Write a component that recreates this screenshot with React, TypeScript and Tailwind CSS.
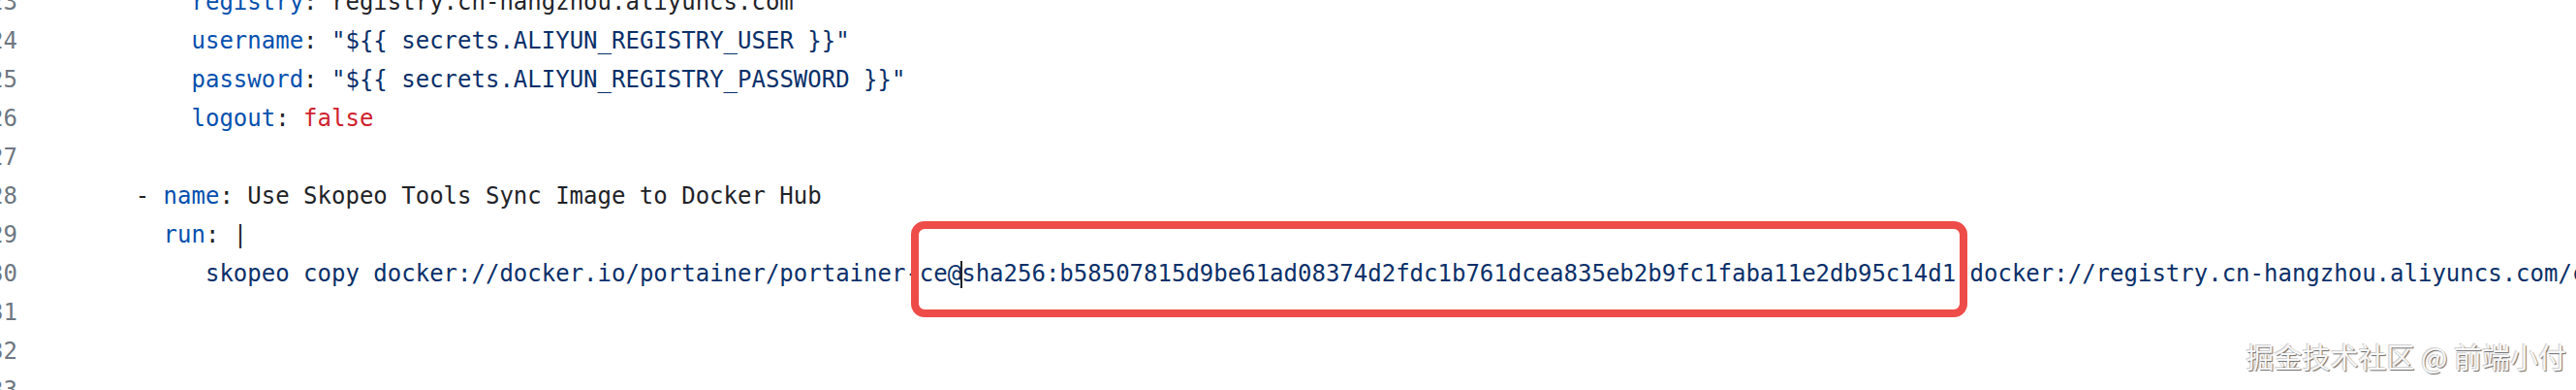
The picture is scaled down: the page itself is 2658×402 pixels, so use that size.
import React from "react";

const K = ({ children }: { children: React.ReactNode }) => (
  <span className="text-[#0550ae]">{children}</span>
);
const S = ({ children }: { children: React.ReactNode }) => (
  <span className="text-[#0a3069]">{children}</span>
);
const R = ({ children }: { children: React.ReactNode }) => (
  <span className="text-[#cf222e]">{children}</span>
);

type Line = { n: number; content: React.ReactNode };

const lines: Line[] = [
  {
    n: 23,
    content: (
      <>
        {"          "}
        <K>registry</K>: registry.cn-hangzhou.aliyuncs.com
      </>
    ),
  },
  {
    n: 24,
    content: (
      <>
        {"          "}
        <K>username</K>: <S>{'"${{ secrets.ALIYUN_REGISTRY_USER }}"'}</S>
      </>
    ),
  },
  {
    n: 25,
    content: (
      <>
        {"          "}
        <K>password</K>: <S>{'"${{ secrets.ALIYUN_REGISTRY_PASSWORD }}"'}</S>
      </>
    ),
  },
  {
    n: 26,
    content: (
      <>
        {"          "}
        <K>logout</K>: <R>false</R>
      </>
    ),
  },
  { n: 27, content: "" },
  {
    n: 28,
    content: (
      <>
        {"      - "}
        <K>name</K>: Use Skopeo Tools Sync Image to Docker Hub
      </>
    ),
  },
  {
    n: 29,
    content: (
      <>
        {"        "}
        <K>run</K>: |
      </>
    ),
  },
  {
    n: 30,
    content: (
      <>
        {"           "}
        <S>
          skopeo copy docker://docker.io/portainer/portainer-ce@
          <span className="inline-block w-[2px] h-[28px] -mx-[1px] bg-[#1f2328] align-middle" />
          sha256:b58507815d9be61ad08374d2fdc1b761dcea835eb2b9fc1faba11e2db95c14d1
          docker://registry.cn-hangzhou.aliyuncs.com/cloud-native-mirror/portainer-ce:latest
        </S>
      </>
    ),
  },
  { n: 31, content: "" },
  { n: 32, content: "" },
  { n: 33, content: "" },
];

export default function App() {
  return (
    <div className="relative w-[2658px] h-[402px] overflow-hidden bg-white">
      <div
        className="-mt-[18px] flex flex-col text-[24px] leading-[40px] text-[#1f2328]"
        style={{ fontFamily: '"DejaVu Sans Mono", "Liberation Mono", monospace' }}
      >
        {lines.map((l) => (
          <div key={l.n} className="flex h-[40px] items-start whitespace-pre">
            <div className="flex w-[18px] shrink-0 justify-end text-[#6e7781]">
              {l.n}
            </div>
            <div className="ml-[35px]">{l.content}</div>
          </div>
        ))}
      </div>

      <div className="pointer-events-none absolute left-[940px] top-[228px] h-[99px] w-[1090px] rounded-[14px] border-[8px] border-[#ee4c48]" />

      <div
        className="absolute right-[10px] top-[348px] text-[29px] leading-[38px] text-[#f7f7f7] [text-shadow:1px_1px_1px_#6b6b6b,_-1px_-1px_0_#d0d0d0]"
        style={{ fontFamily: '"Noto Sans CJK SC", "Noto Sans", sans-serif' }}
      >
        掘金技术社区 @ 前端小付
      </div>
    </div>
  );
}
